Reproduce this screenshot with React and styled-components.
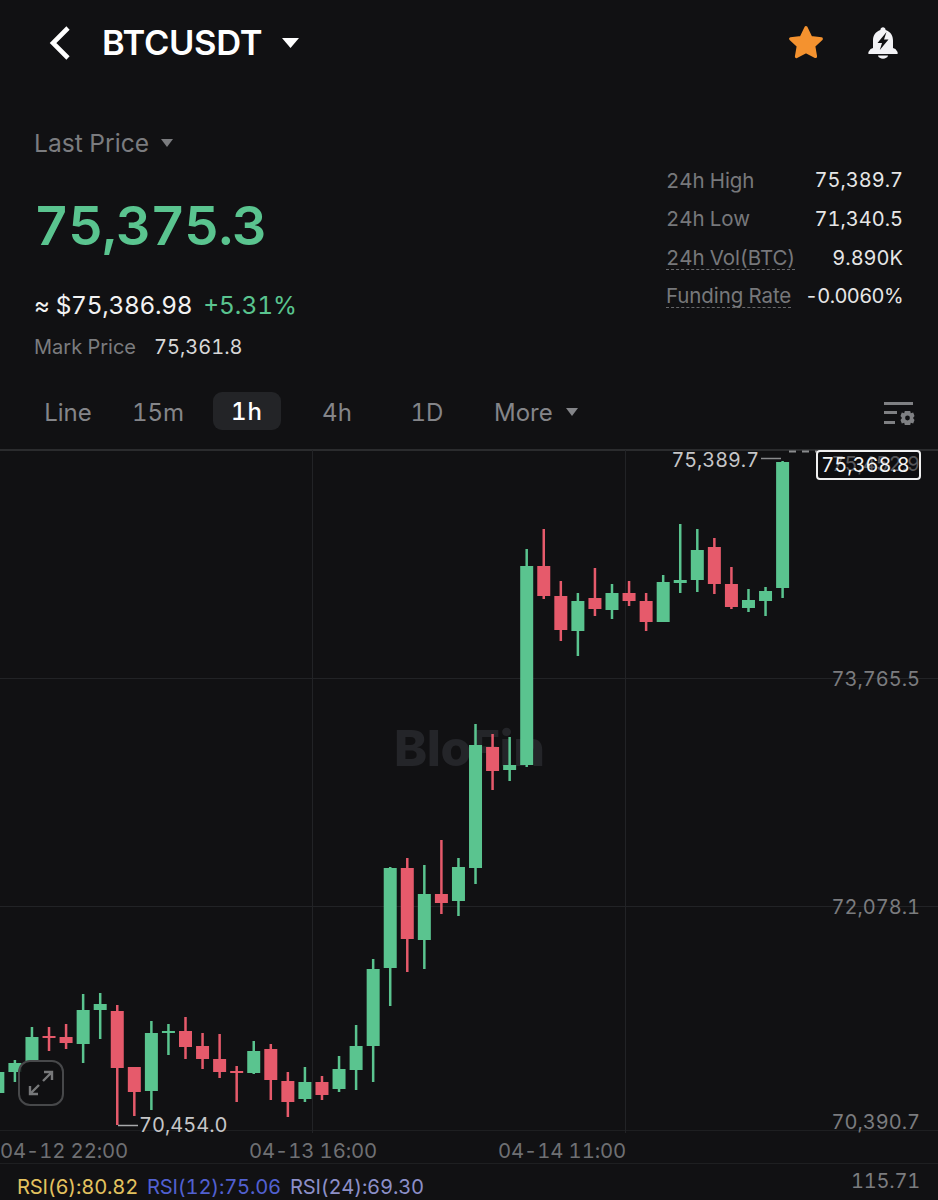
import React from "react";
import styled, { createGlobalStyle } from "styled-components";

const GREEN = "#5ac48f";
const RED = "#e65a6b";

const GlobalStyle = createGlobalStyle`
  html, body {
    margin: 0;
    padding: 0;
    background: #111113;
  }
  * {
    box-sizing: border-box;
  }
`;

// body top, body bottom, wick top, wick bottom, colour. Newest candle first.
const candles = [
  [462, 588, 461, 598, "g"],
  [591, 601, 587, 616, "g"],
  [600, 608, 589, 612, "g"],
  [584, 607, 567, 609, "r"],
  [547, 584, 538, 594, "r"],
  [550, 580, 529, 592, "g"],
  [580, 583, 524, 593, "g"],
  [582, 622, 575, 622, "g"],
  [601, 622, 593, 631, "r"],
  [593, 601, 581, 606, "r"],
  [593, 610, 584, 619, "g"],
  [598, 609, 568, 616, "r"],
  [601, 631, 593, 656, "g"],
  [596, 630, 581, 641, "r"],
  [566, 596, 529, 599, "r"],
  [566, 765, 549, 767, "g"],
  [765, 770, 737, 781, "g"],
  [747, 771, 734, 790, "r"],
  [745, 868, 724, 884, "g"],
  [867, 901, 858, 916, "g"],
  [894, 903, 840, 914, "r"],
  [894, 940, 865, 969, "g"],
  [868, 939, 858, 972, "r"],
  [868, 968, 867, 1006, "g"],
  [969, 1046, 959, 1082, "g"],
  [1046, 1070, 1025, 1090, "g"],
  [1069, 1089, 1056, 1092, "g"],
  [1082, 1095, 1076, 1100, "r"],
  [1082, 1099, 1067, 1102, "g"],
  [1081, 1102, 1072, 1117, "r"],
  [1049, 1080, 1044, 1100, "r"],
  [1051, 1073, 1041, 1074, "g"],
  [1071, 1073, 1066, 1102, "r"],
  [1059, 1072, 1034, 1078, "r"],
  [1046, 1059, 1033, 1069, "r"],
  [1031, 1047, 1017, 1059, "r"],
  [1031, 1033, 1024, 1055, "g"],
  [1033, 1091, 1021, 1110, "g"],
  [1067, 1092, 1067, 1116, "r"],
  [1011, 1068, 1005, 1125, "r"],
  [1004, 1010, 993, 1039, "g"],
  [1010, 1044, 994, 1063, "g"],
  [1037, 1043, 1024, 1049, "r"],
  [1036, 1038, 1027, 1051, "r"],
  [1037, 1061, 1027, 1061, "g"],
  [1063, 1072, 1060, 1082, "g"],
  [1072, 1093, 1072, 1093, "g"],
];

const tabs = ["Line", "15m", "1h", "4h", "1D"];

const stats = [
  { label: "24h High", value: "75,389.7" },
  { label: "24h Low", value: "71,340.5" },
  { label: "24h Vol(BTC)", value: "9.890K", dashed: true },
  { label: "Funding Rate", value: "-0.0060%", dashed: true, tight: true },
];

const Page = styled.div`
  width: 938px;
  height: 1200px;
  overflow: hidden;
  background: #111113;
  color: #fff;
  font-family: Inter, "Liberation Sans", sans-serif;
  font-variant-numeric: tabular-nums;
  display: flex;
  flex-direction: column;
`;

const Header = styled.header`
  height: 88px;
  padding: 0 40px 2px 48px;
  display: flex;
  align-items: center;
`;

const Symbol = styled.h1`
  margin: 0 0 0 30px;
  font-size: 34.5px;
  font-weight: 600;
  letter-spacing: -0.3px;
`;

const HeaderActions = styled.div`
  margin-left: auto;
  display: flex;
  align-items: center;
  gap: 44px;
`;

const Caret = styled.svg`
  display: block;
  flex: none;
  margin-left: ${(p) => p.$gap}px;
  fill: ${(p) => p.$color};
`;

const Summary = styled.section`
  height: 279px;
  padding: 0 35px 0 34px;
  display: flex;
  justify-content: space-between;
`;

const PriceColumn = styled.div`
  padding-top: 38px;
  display: flex;
  flex-direction: column;
`;

const LastPriceRow = styled.div`
  height: 34px;
  display: flex;
  align-items: center;
  font-size: 24.6px;
  color: #7b7c7f;
`;

const BigPrice = styled.div`
  margin-top: 32px;
  height: 66px;
  line-height: 66px;
  font-size: 54.2px;
  font-weight: 600;
  letter-spacing: -0.9px;
  color: ${GREEN};
`;

const FiatRow = styled.div`
  margin-top: 30px;
  height: 34px;
  display: flex;
  align-items: center;
  font-size: 24.4px;
  letter-spacing: -0.3px;
  color: #f2f2f2;
`;

const Change = styled.span`
  margin-left: 11px;
  letter-spacing: 0;
  color: ${GREEN};
`;

const MarkRow = styled.div`
  margin-top: 11px;
  display: flex;
  align-items: center;
  gap: 18px;
  height: 28px;
  font-size: 20px;
`;

const MarkLabel = styled.span`
  color: #7b7c7f;
`;

const MarkValue = styled.span`
  font-size: 20px;
  color: #d8d8d8;
`;

const StatsTable = styled.div`
  margin-top: 78px;
  width: 237px;
  display: flex;
  flex-direction: column;
  gap: 10px;
`;

const StatRow = styled.div`
  height: 28.7px;
  display: flex;
  align-items: center;
  justify-content: space-between;
  font-size: 20.5px;
`;

const StatLabel = styled.span`
  color: #77787b;
  letter-spacing: -0.1px;
  border-bottom: ${(p) => (p.$dashed ? "1.5px dashed #66676a" : "none")};
  line-height: 23px;
`;

const StatValue = styled.span`
  font-size: 20px;
  letter-spacing: ${(p) => (p.$tight ? "-0.6px" : "0")};
  color: #e6e6e6;
`;

const TabBar = styled.nav`
  height: 83px;
  padding: 10px 23px 0 23px;
  display: flex;
  align-items: center;
`;

const TabList = styled.div`
  display: grid;
  grid-template-columns: 90px 90px 89px 90px 90px auto;
  align-items: center;
`;

const Tab = styled.div`
  height: 38px;
  margin: ${(p) => (p.$active ? "-1px 11px 1px 10px" : "0")};
  display: flex;
  align-items: center;
  justify-content: center;
  border-radius: 9px;
  font-size: 24px;
  letter-spacing: ${(p) => (p.$active ? "1px" : "0")};
  color: ${(p) => (p.$active ? "#fff" : "#848589")};
  background: ${(p) => (p.$active ? "#232427" : "transparent")};
  font-weight: ${(p) => (p.$active ? 500 : 400)};
`;

const MoreTab = styled(Tab)`
  justify-content: flex-start;
  padding-left: 22px;
`;

const SettingsIcon = styled.svg`
  display: block;
  margin-left: auto;
  margin-top: 4px;
`;

const Plot = styled.div`
  position: relative;
  height: 683px;
  border-top: 2px solid #2b2c2e;
`;

const PlotSvg = styled.svg`
  position: absolute;
  left: 0;
  top: -1px;
`;

const Watermark = styled.div`
  position: absolute;
  left: 394px;
  top: 269px;
  font-size: 50px;
  line-height: 56px;
  font-weight: 800;
  letter-spacing: -0.5px;
  color: #242529;
`;

const AxisLabel = styled.span`
  position: absolute;
  right: 18px;
  top: ${(p) => p.$top}px;
  font-size: 20px;
  line-height: 26px;
  color: ${(p) => p.$color || "#7b7c7f"};
`;

const PriceTag = styled.div`
  position: absolute;
  left: 816px;
  top: -1px;
  width: 105px;
  height: 30px;
  padding-right: 6px;
  border: 2px solid #f0f0f0;
  border-radius: 4px;
  background: rgba(10, 10, 11, 0.3);
  display: flex;
  align-items: center;
  justify-content: center;
  font-size: 20px;
  color: #f4f4f4;
`;

const HighLabel = styled.span`
  position: absolute;
  right: 179px;
  top: -4px;
  font-size: 19.8px;
  line-height: 26px;
  color: #c6c6c8;
`;

const LowLabel = styled.span`
  position: absolute;
  left: 139px;
  top: 661px;
  font-size: 20px;
  line-height: 26px;
  color: #c6c6c8;
`;

const ExpandButton = styled.div`
  position: absolute;
  left: 18px;
  top: 609px;
  width: 46px;
  height: 46px;
  border: 2px solid #47484a;
  border-radius: 12px;
  background: rgba(17, 17, 19, 0.85);
  display: flex;
  align-items: center;
  justify-content: center;
`;

const TimeAxis = styled.div`
  height: 34px;
  padding-top: 6px;
  border-top: 1px solid #1e1f21;
  border-bottom: 1px solid #1e1f21;
  display: grid;
  grid-template-columns: repeat(3, 249px);
  align-items: center;
  font-size: 20.3px;
  letter-spacing: -0.1px;
  color: #6f7073;
`;

const IndicatorRow = styled.div`
  flex: 1;
  position: relative;
  padding-left: 17px;
  padding-top: 10px;
  display: flex;
  gap: 9px;
  font-size: 20.2px;
  line-height: 26px;
  letter-spacing: -0.2px;
`;

const Rsi = styled.span`
  color: ${(p) => p.$color};
`;

const BackIcon = () => (
  <svg width="24" height="36" viewBox="0 0 24 36" fill="none" style={{ display: "block" }}>
    <path d="M20 3 L5 18 L20 33" stroke="#fff" strokeWidth="4.6" strokeLinejoin="miter" />
  </svg>
);

const StarIcon = () => (
  <svg width="36" height="35" viewBox="0 0 36 35" style={{ display: "block" }}>
    <path
      d="M18 2.5 L22.8 12.4 L33.4 13.8 L25.8 21 L27.6 31.6 L18 26.6 L8.4 31.6 L10.2 21 L2.6 13.8 L13.2 12.4 Z"
      fill="#f4922f"
      stroke="#f4922f"
      strokeWidth="3"
      strokeLinejoin="round"
    />
  </svg>
);

const BellIcon = () => (
  <svg width="30" height="34" viewBox="0 0 30 34" style={{ display: "block" }}>
    <path
      d="M12.4 4 C12.4 0.4 17.6 0.4 17.6 4 C22.6 5.6 25 9.6 25 14.5 L25 22 L27.4 23 L29.6 26 L29.6 28 L0.4 28 L0.4 26 L2.6 23 L5 22 L5 14.5 C5 9.6 7.4 5.6 12.4 4 Z"
      fill="#f3f3f6"
    />
    <path d="M10 29.6 L20 29.6 C19.4 33.8 10.6 33.8 10 29.6 Z" fill="#f3f3f6" />
    <path d="M18.5 6 L9.5 17 L14 17 L11.8 24 L20.5 13.4 L16 13.4 Z" fill="#111113" />
  </svg>
);

const Settings = () => (
  <SettingsIcon width="32" height="26" viewBox="0 0 32 26">
    <g fill="#7f8083">
      <rect x="1" y="1" width="29" height="3" />
      <rect x="1" y="10" width="13" height="3" />
      <rect x="1" y="20" width="11" height="3" />
      <path
        fillRule="evenodd"
        d="M21.8 10 H27.2 L27.8 12.2 L30.2 11.6 L31.5 15 L30 17 L31.5 19 L30.2 22.4 L27.8 21.8 L27.2 24 H21.8 L21.2 21.8 L18.8 22.4 L17.5 19 L19 17 L17.5 15 L18.8 11.6 L21.2 12.2 Z M24.5 14.6 A2.4 2.4 0 1 0 24.5 19.4 A2.4 2.4 0 1 0 24.5 14.6 Z"
      />
    </g>
  </SettingsIcon>
);

const ExpandIcon = () => (
  <svg width="28" height="28" viewBox="0 0 28 28" fill="none" stroke="#77787a" strokeWidth="2.4">
    <path d="M16 12 L25 3 M17 3 L25 3 L25 11" />
    <path d="M12 16 L3 25 M3 17 L3 25 L11 25" />
  </svg>
);

const Candle = ({ index, data }) => {
  const [top, bottom, wickTop, wickBottom, kind] = data;
  const x = 782.6 - index * 17.06;
  const color = kind === "g" ? GREEN : RED;
  return (
    <g fill={color}>
      <rect x={x - 1.25} y={wickTop} width="2.5" height={wickBottom - wickTop} />
      <rect x={x - 6.5} y={top} width="13" height={bottom - top} />
    </g>
  );
};

const ChartDrawing = () => (
  <PlotSvg width="938" height="685" viewBox="0 450 938 685">
    <g stroke="#222326" strokeWidth="1">
      <path d="M312.5 450 V1133" />
      <path d="M625.5 450 V1133" />
      <path d="M0 678.5 H938" />
      <path d="M0 906.5 H938" />
    </g>
    {candles.map((c, i) => (
      <Candle key={i} index={i} data={c} />
    ))}
    <path d="M761 458.5 H781" stroke="#8a8b8d" strokeWidth="1.5" />
    <path d="M789 451.5 H817" stroke="#8a8b8d" strokeWidth="2" strokeDasharray="7 6" />
    <path d="M118 1125.5 H138" stroke="#a8a9ab" strokeWidth="1.5" />
  </PlotSvg>
);

export default function App() {
  return (
    <>
      <GlobalStyle />
      <Page>
        <Header>
          <BackIcon />
          <Symbol>BTCUSDT</Symbol>
          <Caret $gap={20} $color="#fff" width="17" height="11" viewBox="0 0 17 11">
            <path d="M0 1 H17 L8.5 11 Z" />
          </Caret>
          <HeaderActions>
            <StarIcon />
            <BellIcon />
          </HeaderActions>
        </Header>

        <Summary>
          <PriceColumn>
            <LastPriceRow>
              Last Price
              <Caret $gap={12} $color="#7b7c7f" width="12" height="8" viewBox="0 0 12 8">
                <path d="M0 0 H12 L6 8 Z" />
              </Caret>
            </LastPriceRow>
            <BigPrice>75,375.3</BigPrice>
            <FiatRow>
              ≈ $75,386.98
              <Change>+5.31%</Change>
            </FiatRow>
            <MarkRow>
              <MarkLabel>Mark Price</MarkLabel>
              <MarkValue>75,361.8</MarkValue>
            </MarkRow>
          </PriceColumn>
          <StatsTable>
            {stats.map((s) => (
              <StatRow key={s.label}>
                <StatLabel $dashed={s.dashed}>{s.label}</StatLabel>
                <StatValue $tight={s.tight}>{s.value}</StatValue>
              </StatRow>
            ))}
          </StatsTable>
        </Summary>

        <TabBar>
          <TabList>
            {tabs.map((t) => (
              <Tab key={t} $active={t === "1h"}>
                {t}
              </Tab>
            ))}
            <MoreTab>
              More
              <Caret $gap={13} $color="#848589" width="12" height="8" viewBox="0 0 12 8">
                <path d="M0 0 H12 L6 8 Z" />
              </Caret>
            </MoreTab>
          </TabList>
          <Settings />
        </TabBar>

        <Plot>
          <Watermark>BloFin</Watermark>
          <ChartDrawing />
          <HighLabel>75,389.7</HighLabel>
          <AxisLabel $top={0} $color="#77787b">75,452.9</AxisLabel>
          <PriceTag>75,368.8</PriceTag>
          <AxisLabel $top={215}>73,765.5</AxisLabel>
          <AxisLabel $top={443}>72,078.1</AxisLabel>
          <AxisLabel $top={658}>70,390.7</AxisLabel>
          <LowLabel>70,454.0</LowLabel>
          <ExpandButton>
            <ExpandIcon />
          </ExpandButton>
        </Plot>

        <TimeAxis>
          <span>04-12 22:00</span>
          <span>04-13 16:00</span>
          <span>04-14 11:00</span>
        </TimeAxis>

        <IndicatorRow>
          <Rsi $color="#e3c25f">RSI(6):80.82</Rsi>
          <Rsi $color="#5160d0">RSI(12):75.06</Rsi>
          <Rsi $color="#8c8fc8">RSI(24):69.30</Rsi>
          <AxisLabel $top={4}>115.71</AxisLabel>
        </IndicatorRow>
      </Page>
    </>
  );
}
